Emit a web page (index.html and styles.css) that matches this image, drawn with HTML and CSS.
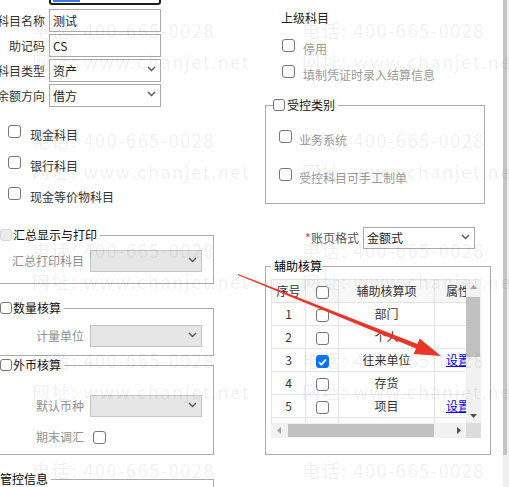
FILE: index.html
```html
<!DOCTYPE html>
<html lang="zh-CN">
<head>
<meta charset="utf-8">
<title>会计科目</title>
<link rel="stylesheet" href="styles.css">
</head>
<body>
<div class="page">
  <div class="col-left">
    <div class="frow first">
      <span class="flabel">科目编码</span>
      <div class="field focused"><span class="selected"></span></div>
    </div>
    <div class="frow"><span class="flabel">科目名称</span><div class="field">测试</div></div>
    <div class="frow"><span class="flabel">助记码</span><div class="field">CS</div></div>
    <div class="frow"><span class="flabel">科目类型</span><div class="field">资产<svg class="chev" width="9" height="6" viewBox="0 0 9 6"><path d="M1 1l3.5 3.5L8 1" fill="none" stroke="#555" stroke-width="1.4"/></svg></div></div>
    <div class="frow"><span class="flabel">余额方向</span><div class="field">借方<svg class="chev" width="9" height="6" viewBox="0 0 9 6"><path d="M1 1l3.5 3.5L8 1" fill="none" stroke="#555" stroke-width="1.4"/></svg></div></div>

    <div class="checks">
      <div class="crow"><span class="cb"></span><span>现金科目</span></div>
      <div class="crow"><span class="cb"></span><span>银行科目</span></div>
      <div class="crow"><span class="cb"></span><span>现金等价物科目</span></div>
    </div>

    <fieldset class="grp grp-sum">
      <legend><span class="cb sm off"></span>汇总显示与打印</legend>
      <div class="irow"><span class="ilabel">汇总打印科目</span><div class="field sm disabled"><span></span><svg class="chev" width="9" height="6" viewBox="0 0 9 6"><path d="M1 1l3.5 3.5L8 1" fill="none" stroke="#555" stroke-width="1.4"/></svg></div></div>
    </fieldset>

    <fieldset class="grp grp-qty">
      <legend><span class="cb sm"></span>数量核算</legend>
      <div class="irow"><span class="ilabel">计量单位</span><div class="field sm disabled"><span></span><svg class="chev" width="9" height="6" viewBox="0 0 9 6"><path d="M1 1l3.5 3.5L8 1" fill="none" stroke="#555" stroke-width="1.4"/></svg></div></div>
    </fieldset>

    <fieldset class="grp grp-fx">
      <legend><span class="cb sm"></span>外币核算</legend>
      <div class="irow"><span class="ilabel">默认币种</span><div class="field sm disabled"><span></span><svg class="chev" width="9" height="6" viewBox="0 0 9 6"><path d="M1 1l3.5 3.5L8 1" fill="none" stroke="#555" stroke-width="1.4"/></svg></div></div>
      <div class="irow chk"><span class="ilabel">期末调汇</span><span class="cb"></span></div>
    </fieldset>

    <fieldset class="grp grp-ctl">
      <legend class="plain">管控信息</legend>
    </fieldset>
  </div>

  <div class="col-right">
    <div class="r-title">上级科目</div>
    <div class="r-check first"><span class="cb"></span><span>停用</span></div>
    <div class="r-check"><span class="cb"></span><span>填制凭证时录入结算信息</span></div>

    <fieldset class="grp grp-ctrl">
      <legend><span class="cb sm"></span>受控类别</legend>
      <div class="g-check"><span class="cb"></span><span>业务系统</span></div>
      <div class="g-check second"><span class="cb"></span><span>受控科目可手工制单</span></div>
    </fieldset>

    <div class="acct-row">
      <span class="req">*</span><span class="alabel">账页格式</span>
      <div class="field sm">金额式<svg class="chev" width="9" height="6" viewBox="0 0 9 6"><path d="M1 1l3.5 3.5L8 1" fill="none" stroke="#555" stroke-width="1.4"/></svg></div>
    </div>

    <fieldset class="grp grp-aux">
      <legend class="plain">辅助核算</legend>
      <div class="tgrid">
        <div class="tview">
          <table class="aux">
            <colgroup><col class="c1"><col class="c2"><col class="c3"><col class="c4"></colgroup>
            <thead>
              <tr><th>序号</th><th><span class="cb"></span></th><th>辅助核算项</th><th class="attr">属性</th></tr>
            </thead>
            <tbody>
              <tr><td>1</td><td><span class="cb"></span></td><td>部门</td><td class="attr"></td></tr>
              <tr><td>2</td><td><span class="cb"></span></td><td>个人</td><td class="attr"></td></tr>
              <tr><td>3</td><td><span class="cb on"><svg width="9" height="8" viewBox="0 0 9 8"><path d="M1 4.2l2.4 2.4L8 1.4" fill="none" stroke="#fff" stroke-width="1.8"/></svg></span></td><td>往来单位</td><td class="attr"><a href="#" class="link">设置</a></td></tr>
              <tr><td>4</td><td><span class="cb"></span></td><td>存货</td><td class="attr"></td></tr>
              <tr><td>5</td><td><span class="cb"></span></td><td>项目</td><td class="attr"><a href="#" class="link">设置</a></td></tr>
              <tr><td></td><td></td><td></td><td class="attr"></td></tr>
            </tbody>
          </table>
        </div>
        <div class="vscroll">
          <div class="sarrow"><svg width="7" height="4" viewBox="0 0 7 4"><path d="M0 4L3.5 0L7 4z" fill="#a3a3a3"/></svg></div>
          <div class="vtrack"><div class="vthumb"></div></div>
          <div class="sarrow"><svg width="7" height="4" viewBox="0 0 7 4"><path d="M0 0L3.5 4L7 0z" fill="#505050"/></svg></div>
        </div>
        <div class="hscroll">
          <div class="sarrow"><svg width="4" height="7" viewBox="0 0 4 7"><path d="M4 0L0 3.5L4 7z" fill="#a3a3a3"/></svg></div>
          <div class="htrack"><div class="hthumb"></div></div>
          <div class="sarrow"><svg width="4" height="7" viewBox="0 0 4 7"><path d="M0 0L4 3.5L0 7z" fill="#505050"/></svg></div>
        </div>
        <div class="corner"></div>
      </div>
    </fieldset>
  </div>

  <div class="page-scroll"><div class="thumb"></div></div>

  <div class="watermark" aria-hidden="true">
    <div class="wm"><div>电话: 400-665-0028</div><div>网址: www.chanjet.net</div></div>
    <div class="wm"><div>电话: 400-665-0028</div><div>网址: www.chanjet.net</div></div>
    <div class="wm"><div>电话: 400-665-0028</div><div>网址: www.chanjet.net</div></div>
    <div class="wm"><div>电话: 400-665-0028</div><div>网址: www.chanjet.net</div></div>
    <div class="wm"><div>电话: 400-665-0028</div><div>网址: www.chanjet.net</div></div>
    <div class="wm"><div>电话: 400-665-0028</div><div>网址: www.chanjet.net</div></div>
    <div class="wm"><div>电话: 400-665-0028</div><div>网址: www.chanjet.net</div></div>
    <div class="wm"><div>电话: 400-665-0028</div><div>网址: www.chanjet.net</div></div>
    <div class="wm"><div>电话: 400-665-0028</div><div>网址: www.chanjet.net</div></div>
    <div class="wm"><div>电话: 400-665-0028</div><div>网址: www.chanjet.net</div></div>
  </div>

  <svg class="arrow" width="509" height="487" viewBox="0 0 509 487" aria-hidden="true">
    <polygon points="238.2,273.9 417.5,344.0 419.6,338.4 441,356 413.6,354.0 416.0,348.6 237.8,274.9" fill="#e8352a"/>
  </svg>
</div>
</body>
</html>
```

FILE: styles.css
```css
* { box-sizing: border-box; }
html, body { margin: 0; padding: 0; }
body {
  width: 509px;
  height: 487px;
  overflow: hidden;
  background: #fff;
  font-family: "Noto Sans CJK SC", "Microsoft YaHei", sans-serif;
  font-size: 12px;
  line-height: 16px;
  color: #333;
}
.page {
  position: relative;
  display: flex;
  width: 509px;
  height: 487px;
  overflow: hidden;
}
.col-left {
  flex: none;
  width: 270px;
  margin-left: -20px;
  padding-right: 36px;
}
.col-right {
  flex: none;
  width: 253px;
  padding: 0 12px 0 15px;
}
.page-scroll {
  flex: none;
  width: 6px;
  background: #efefef;
}
.page-scroll .thumb {
  width: 4px;
  height: 455px;
  background: #c4c4c4;
}

/* form rows */
.frow {
  display: flex;
  align-items: center;
  height: 23px;
  margin-bottom: 2px;
}
.frow.first { margin-top: -18px; margin-bottom: 4px; }
.flabel {
  flex: none;
  width: 65px;
  margin-right: 4px;
  text-align: right;
  white-space: nowrap;
  color: #333;
}
.field {
  flex: none;
  display: flex;
  align-items: center;
  justify-content: space-between;
  width: 112px;
  height: 23px;
  padding: 0 4px 0 3px;
  border: 1px solid #a9a9a9;
  background: #fff;
  color: #222;
  white-space: nowrap;
  overflow: hidden;
}
.field.sm { height: 22px; }
.field.focused {
  border: 2px solid #1c1c1c;
  border-radius: 3px;
  align-items: flex-end;
  padding-left: 2px;
}
.selected {
  display: block;
  width: 27px;
  height: 17px;
  margin-bottom: 1px;
  background: #3b78e7;
}
.chev { flex: none; margin-bottom: 3px; }
.field.disabled {
  background: #e6e6e6;
  border-color: #c4c4c4;
}

/* checkboxes */
.cb {
  flex: none;
  display: inline-flex;
  align-items: center;
  justify-content: center;
  width: 13px;
  height: 13px;
  border: 1px solid #767676;
  border-radius: 3px;
  background: #fff;
}
.cb.sm { width: 12px; height: 12px; }
.cb.off { border-color: #d6d6d6; background: #ececec; }
.cb.on { background: #0075ff; border-color: #0075ff; }

.checks { margin-top: 12px; padding-left: 28px; }
.crow {
  display: flex;
  align-items: center;
  height: 31px;
  color: #333;
}
.crow .cb { margin-right: 9px; margin-bottom: 7px; }

/* fieldsets */
.grp {
  min-width: 0;
  margin: 0;
  padding: 0;
  border: 1px solid #ababab;
}
.grp legend {
  display: flex;
  align-items: center;
  height: 16px;
  padding: 0 3px 0 0;
  color: #111;
  white-space: nowrap;
}
.grp legend .cb { margin-right: 1px; }
.grp-sum { margin: 15px 0 0 12px; padding: 7px 0 11px 7px; }
.grp-qty { margin: 16px 0 0 12px; padding: 9px 0 8px 7px; }
.grp-fx  { margin: 1px 0 0 12px; padding: 22px 0 6px 7px; }
.grp-ctl { margin: 16px 0 0 12px; padding: 0 0 40px 7px; }

.irow {
  display: flex;
  align-items: center;
  height: 22px;
}
.irow.chk { margin-top: 9px; }
.irow.chk .cb { margin-left: 3px; }
.ilabel {
  flex: none;
  width: 84px;
  margin-right: 6px;
  text-align: right;
  white-space: nowrap;
  color: #8f8f8f;
}

/* right column */
.r-title {
  display: flex;
  align-items: center;
  height: 24px;
  margin-top: 6px;
  padding-left: 16px;
  color: #222;
}
.r-check {
  display: flex;
  align-items: center;
  height: 26px;
  padding-left: 17px;
  color: #999;
}
.r-check.first { margin-top: 6px; }
.r-check .cb { margin-right: 8px; margin-bottom: 7px; }

.grp-ctrl { margin: 9px 6px 0 0; padding: 14px 0 12px 7px; }
.grp-ctrl legend .cb { margin-right: 2px; }
.g-check {
  display: flex;
  align-items: center;
  height: 26px;
  padding-left: 6px;
  color: #999;
}
.g-check.second { margin-top: 12px; }
.g-check .cb { margin-right: 7px; margin-bottom: 7px; }

.acct-row {
  display: flex;
  align-items: center;
  height: 22px;
  margin-top: 23px;
  padding-left: 40px;
}
.req { flex: none; width: 6px; color: #e23b3b; }
.alabel { flex: none; margin-right: 4px; color: #555; }

.grp-aux { margin: 9px 0 0 0; padding: 5px 0 16px 5px; }
.grp-aux legend.plain { padding: 0 0 0 3px; color: #000; }
legend.plain { color: #000; }

/* table */
.tgrid {
  display: grid;
  grid-template-columns: 195px 15px;
  grid-template-rows: 144px 15px;
  width: 210px;
}
.tview { overflow: hidden; }
.aux {
  border-collapse: collapse;
  table-layout: fixed;
  width: 223px;
  color: #333;
}
.aux .c1 { width: 34px; }
.aux .c2 { width: 33px; }
.aux .c3 { width: 96px; }
.aux .c4 { width: 60px; }
.aux th, .aux td {
  height: 23px;
  padding: 0;
  border: 1px solid #e3e3e3;
  text-align: center;
  font-weight: normal;
  white-space: nowrap;
  overflow: hidden;
}
.aux thead th { background: #f7f7f7; }
.aux th .cb, .aux td .cb { vertical-align: middle; }
.aux .attr { text-align: left; padding-left: 11px; }
.link { color: #0000ee; text-decoration: underline; }

.vscroll {
  display: flex;
  flex-direction: column;
  background: #f1f1f1;
}
.sarrow {
  flex: none;
  display: flex;
  align-items: center;
  justify-content: center;
  width: 15px;
  height: 15px;
}
.vtrack { flex: 1; padding: 3px 1px 0 0; }
.vthumb { height: 60px; background: #c1c1c1; }
.hscroll {
  display: flex;
  background: #f1f1f1;
}
.htrack { flex: 1; padding: 0 0 1px 2px; display: flex; align-items: stretch; }
.hthumb { width: 146px; background: #c1c1c1; margin: 1px 0 0; }
.corner { background: #dcdcdc; }

/* overlays */
.watermark {
  position: absolute;
  left: 0;
  top: 0;
  width: 509px;
  height: 487px;
  display: grid;
  grid-template-columns: repeat(2, 270px);
  grid-auto-rows: 110px;
  padding: 15px 0 0 32px;
  font-size: 18px;
  line-height: 31px;
  letter-spacing: 1.6px;
  color: rgba(0, 0, 0, 0.07);
  white-space: nowrap;
  overflow: hidden;
  pointer-events: none;
}
.arrow {
  position: absolute;
  left: 0;
  top: 0;
  pointer-events: none;
}
```
